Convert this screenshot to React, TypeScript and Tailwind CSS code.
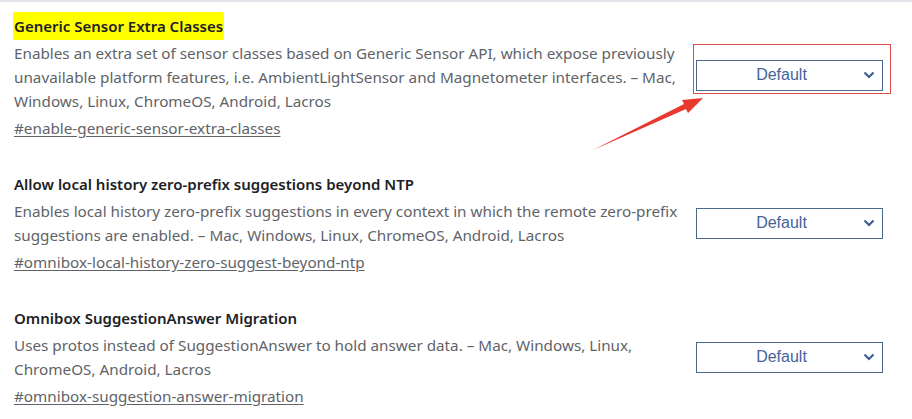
import React from 'react';

type Flag = {
  title: string;
  description: string;
  link: string;
  highlight?: boolean;
};

const flags: Flag[] = [
  {
    title: 'Generic Sensor Extra Classes',
    description:
      'Enables an extra set of sensor classes based on Generic Sensor API, which expose previously unavailable platform features, i.e. AmbientLightSensor and Magnetometer interfaces. – Mac, Windows, Linux, ChromeOS, Android, Lacros',
    link: '#enable-generic-sensor-extra-classes',
    highlight: true,
  },
  {
    title: 'Allow local history zero-prefix suggestions beyond NTP',
    description:
      'Enables local history zero-prefix suggestions in every context in which the remote zero-prefix suggestions are enabled. – Mac, Windows, Linux, ChromeOS, Android, Lacros',
    link: '#omnibox-local-history-zero-suggest-beyond-ntp',
  },
  {
    title: 'Omnibox SuggestionAnswer Migration',
    description:
      'Uses protos instead of SuggestionAnswer to hold answer data. – Mac, Windows, Linux, ChromeOS, Android, Lacros',
    link: '#omnibox-suggestion-answer-migration',
  },
];

const Select = () => (
  <div className="relative flex h-[31px] w-[187px] shrink-0 items-center justify-center border border-[#4a6a8a] bg-white pr-[16px]">
    <span className="font-['Liberation_Sans',Arial,sans-serif] text-[16px] text-[#44639a]">Default</span>
    <svg
      className="absolute right-[7px] top-1/2 -translate-y-1/2"
      width="12"
      height="8"
      viewBox="0 0 12 8"
      fill="none"
    >
      <path d="M1.5 1.5l4.5 4.5 4.5-4.5" stroke="#3e5f94" strokeWidth="2.2" />
    </svg>
  </div>
);

export default function App() {
  return (
    <div className="relative h-[419px] w-[912px] overflow-hidden bg-white font-['Noto_Sans',sans-serif]">
      {/* top edge */}
      <div className="h-[2px] bg-[#e4e4ea]" />

      <div className="flex flex-col gap-[32px] pl-[14px] pt-[12px]">
        {flags.map((flag) => (
          <div key={flag.link} className="flex items-center">
            <div className="w-[668px]">
              <div className="mb-[3px] h-[24px] leading-[24px]">
                <span
                  className={`text-[15px] font-semibold text-[#202124] ${
                    flag.highlight ? 'rounded-[2px] bg-[#ffff00] py-[4px] pr-[1px] pl-[1px] -ml-[1px]' : ''
                  }`}
                >
                  {flag.title}
                </span>
              </div>
              <p className="text-[15.25px] leading-[24px] text-[#5f6368]">{flag.description}</p>
              <a className="mt-[3px] block text-[15.25px] leading-[24px] text-[#5f6368] underline underline-offset-[2px]">
                {flag.link}
              </a>
            </div>
            <div className={flag.highlight ? 'ml-[14px] -mt-[4px]' : 'ml-[14px]'}>
              <Select />
            </div>
          </div>
        ))}
      </div>

      {/* annotation: red box + arrow */}
      <div className="pointer-events-none absolute left-[693px] top-[44px] h-[50px] w-[198px] border border-[#dc4b4b]" />
      <svg className="pointer-events-none absolute left-0 top-0" width="912" height="419">
        <polygon
          points="593,150 686,109 688,113 703,98 682,100 684,104"
          fill="#e8382f"
        />
      </svg>
    </div>
  );
}
